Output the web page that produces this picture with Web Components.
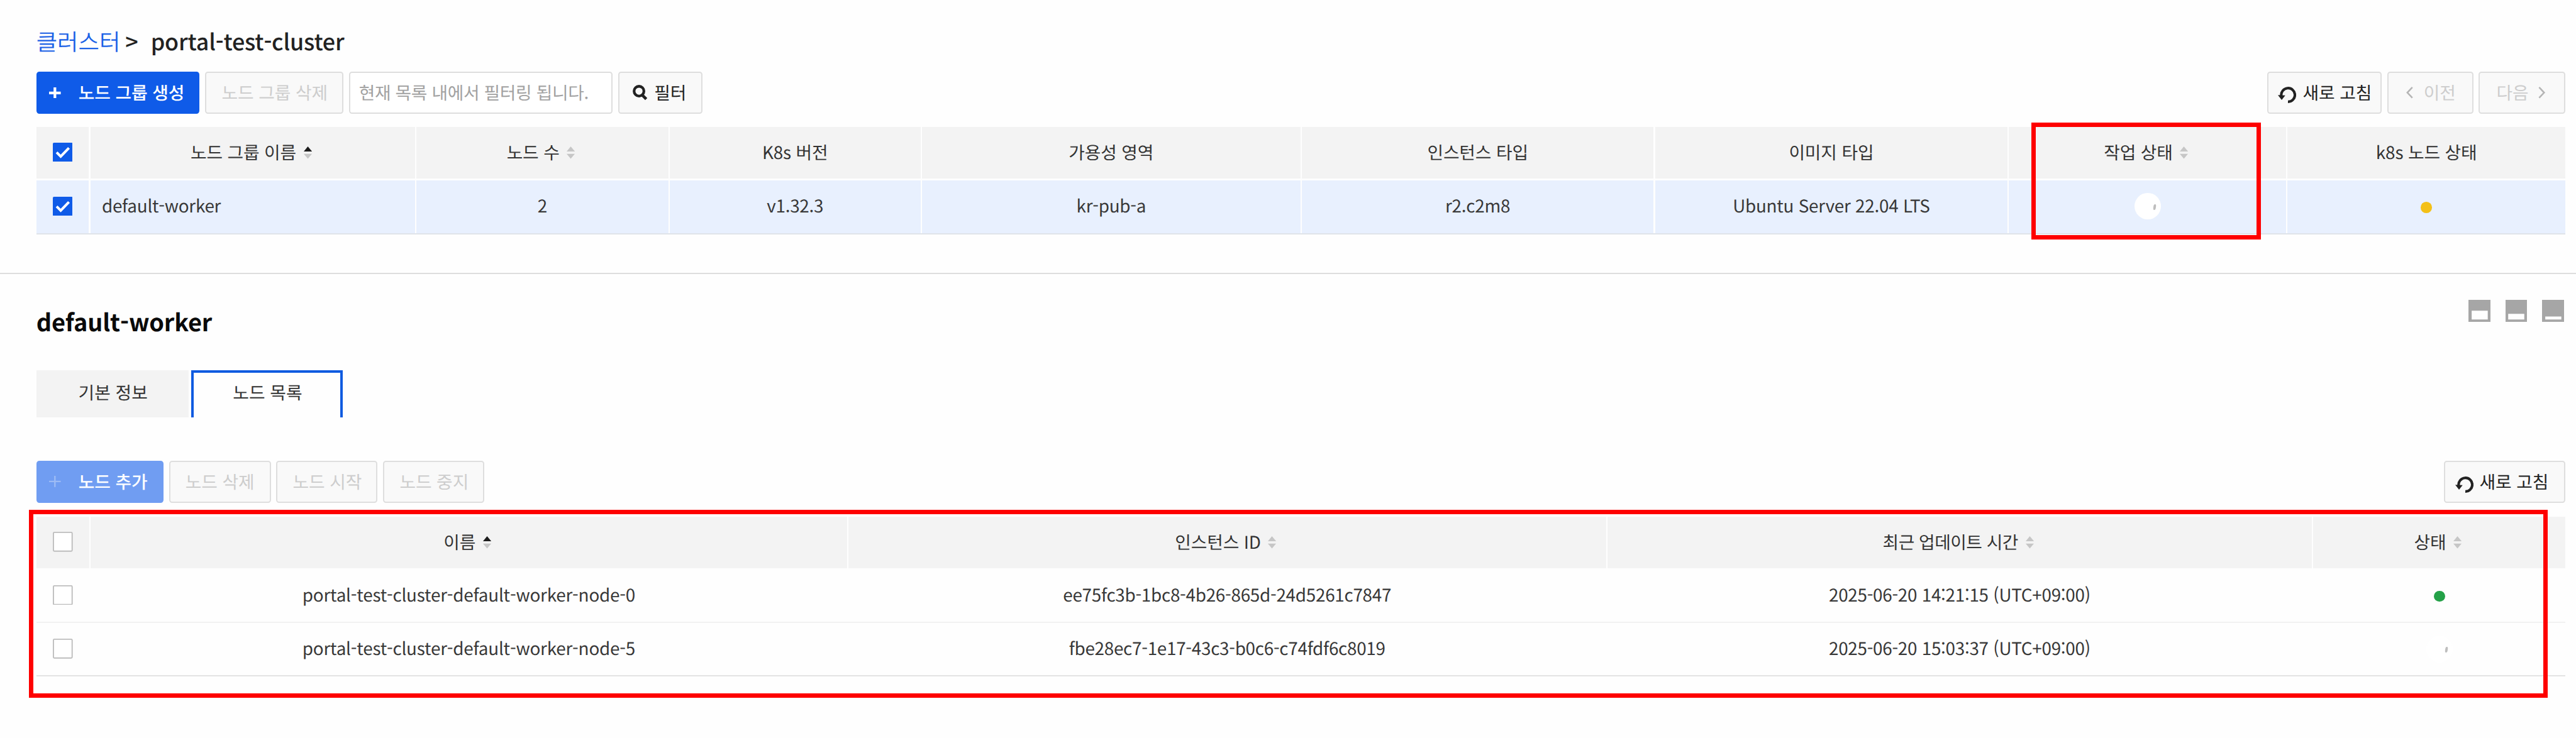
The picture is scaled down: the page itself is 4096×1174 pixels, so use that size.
<!DOCTYPE html>
<html lang="ko">
<head>
<meta charset="utf-8">
<title>portal-test-cluster</title>
<style>
  /* 1rem = ten design pixels on a 4400px wide canvas */
  html { font-size: calc(100vw / 440); }
  body { margin: 0; background: #fefefe; overflow: hidden; }
</style>
</head>
<body>
<cluster-page></cluster-page>
<script>
const define = (name, html, setup) => {
  const tpl = document.createElement('template');
  tpl.innerHTML = html;
  customElements.define(name, class extends HTMLElement {
    constructor() {
      super();
      this.attachShadow({ mode: 'open' }).append(tpl.content.cloneNode(true));
    }
    connectedCallback() { if (setup) setup(this, this.shadowRoot); }
  });
};

const ICONS = {
  plus: [20, 19, '<path d="M10 0v19M0 9.5h20" stroke="currentColor" stroke-width="4.6" fill="none"/>'],
  'plus-thin': [20, 19, '<path d="M10 0v19M0 9.5h20" stroke="currentColor" stroke-width="2.6" fill="none"/>'],
  search: [25, 26, '<circle cx="10.8" cy="10.8" r="8.400" stroke="currentColor" stroke-width="4.6" fill="none"/><path d="M16 17l7.200 7.300" stroke="currentColor" stroke-width="5" fill="none"/>'],
  refresh: [31, 28, '<path d="M5.800 15.500A11.700 11.700 0 1 1 17.200 25.700" stroke="currentColor" stroke-width="4.4" fill="none"/><path d="M0 14.300l12.600.4L6.500 22.500z" fill="currentColor"/>'],
  prev: [12, 20, '<path d="M10.5 1L2 10l8.500 9" stroke="currentColor" stroke-width="2.8" fill="none"/>'],
  next: [12, 20, '<path d="M1.500 1L10 10l-8.500 9" stroke="currentColor" stroke-width="2.8" fill="none"/>'],
  check: [34, 33, '<rect width="34" height="33" rx="2" fill="#0f5be8"/><path d="M6.500 16.500l7 7L27.500 9" stroke="#fff" stroke-width="4.4" fill="none"/>'],
  box: [34, 34, '<rect x="1" y="1" width="32" height="32" rx="1.500" fill="#fff" stroke="#bdbdbd" stroke-width="2"/>'],
  'pane-half': [38, 38, '<path fill="#a6a6a6" fill-rule="evenodd" d="M0 0h38v38H0zM5.500 18.500v15h27.500v-15z"/>'],
  'pane-third': [37, 38, '<path fill="#a6a6a6" fill-rule="evenodd" d="M0 0h37v38H0zM4.500 24v9.500h27.500V24z"/>'],
  'pane-min': [38, 38, '<path fill="#a6a6a6" fill-rule="evenodd" d="M0 0h38v38H0zM5.500 28.500v5h27.500v-5z"/>'],
  sort: [14, 21, '<path d="M0 8.500L7 0l7 8.500z" fill="#c6c6c6"/><path d="M0 12.500h14L7 21z" fill="#c6c6c6"/>'],
  'sort-asc': [14, 21, '<path d="M0 8.500L7 0l7 8.500z" fill="#1c1c1c"/><path d="M0 12.500h14L7 21z" fill="#c6c6c6"/>']
};

define('ui-icon', `<style>:host{display:block;flex:none;line-height:0}svg{display:block}</style>`, (el, root) => {
  const [w, h, body] = ICONS[el.getAttribute('name')];
  root.innerHTML += `<svg viewBox="0 0 ${w} ${h}" style="width:${w / 10}rem;height:${h / 10}rem">${body}</svg>`;
});

define('ui-button', `<style>
  :host{display:flex;align-items:center;box-sizing:border-box;height:7.2rem;border:.23rem solid #dedede;border-radius:.5rem;
    background:#f9f9f9;color:#222;white-space:nowrap;letter-spacing:-.01rem;font-weight:400}
  :host([disabled]){color:#cdcdcd}
  :host([primary]){background:#0f5be8;border-color:#0f5be8;color:#fff;font-weight:500}
  :host([primary][disabled]){background:#709df2;border-color:#709df2}
  :host([field]){background:#fff;color:#a2a2a2;letter-spacing:-.04rem}
</style><slot></slot>`);

define('tab-item', `<style>
  :host{display:flex;align-items:center;justify-content:center;box-sizing:border-box;height:8rem;background:#f3f3f3;color:#333;
    padding:0 0 .5rem .2rem}
  :host([active]){background:#fefefe;border:.44rem solid #0f5be0;border-bottom:0;padding-bottom:.9rem}
</style><slot></slot>`);

define('data-grid', `<style>:host{display:flex;flex-direction:column}</style><slot></slot>`);

define('grid-row', `<style>
  :host{display:grid;grid-template-columns:var(--cols);column-gap:.24rem;box-sizing:border-box;height:9.1rem;color:#383838;
    letter-spacing:-.026rem}
  :host([head]){--cell:#f3f3f3;height:8.9rem;color:#333;letter-spacing:-.015rem}
  :host([selected]){--cell:#e8f0fe;border-bottom:.23rem solid #dfe3e9;height:9.2rem;margin-top:.3rem}
  :host([line]){border-bottom:.23rem solid #f2f2f2}
  :host([end]){border-bottom:.23rem solid #e3e3e3}
</style><slot></slot>`);

define('grid-cell', `<style>
  :host{display:flex;align-items:center;justify-content:center;background:var(--cell,transparent);white-space:nowrap;min-width:0}
  :host([start]){justify-content:flex-start;padding-left:1.98rem}
  :host([up]){padding-bottom:.4rem}
  :host([lift]){padding-bottom:.2rem}
  ::slotted(.sort){margin:0 .5rem 0 1.25rem}
</style><slot></slot>`);

define('status-dot', `<style>
  :host{display:block;width:1.9rem;height:1.9rem;border-radius:50%;background:var(--dot);margin-top:.4rem}
</style>`);

define('status-spinner', `<style>
  :host{display:flex;align-items:center;justify-content:flex-end;box-sizing:border-box;width:4.5rem;height:4.6rem;border-radius:50%;
    background:#fff;padding:.3rem .75rem 0 0}
  i{display:block;width:.45rem;height:1rem;border-radius:40%;background:#bebebe;transform:skewX(-8deg)}
</style><i></i>`);

define('focus-frame', `<style>
  :host{position:absolute;box-sizing:border-box;border:.76rem solid #fe0000;pointer-events:none}
</style>`);

define('cluster-page', `<style>
  :host{display:block;position:relative;box-sizing:border-box;width:100vw;height:100vh;overflow:hidden;
    font:400 2.99rem/4.4rem "Noto Sans CJK KR","Noto Sans",sans-serif;color:#333;text-rendering:geometricPrecision}
  section,.bar,.group,.crumb,.tabs,.panes,.head{display:flex}
  section{flex-direction:column;padding:0 1.8rem 0 6.2rem}
  .crumb{height:5.5rem;padding-top:4.2rem;align-items:baseline;font-size:3.85rem;line-height:5.6rem;color:#222;white-space:nowrap}
  .crumb a{color:#1b62e6;font-size:3.9rem;font-weight:350;width:15.2rem}
  .crumb span{font-weight:500;letter-spacing:-.014rem}
  .crumb .sep{width:4.35rem}
  .bar{justify-content:space-between}
  .bar.one{margin-top:2.55rem}
  .bar.two{margin-top:7.4rem}
  .group{gap:.95rem}
  .g1{--cols:8.98rem 55.46rem 43.03rem 42.85rem 64.65rem 60.09rem 60.23rem 47.31rem 1fr;margin-top:2.2rem}
  .g2{--cols:9.06rem 129.15rem 129.44rem 120.31rem 1fr;margin-top:2.4rem}
  .rule{height:.2rem;background:#dedede;margin-top:6.600rem}
  .head{justify-content:space-between;align-items:flex-start;margin-top:4.4rem}
  h2{margin:.65rem 0 0;font-size:4.07rem;line-height:6rem;font-weight:700;color:#0a0a0a;letter-spacing:-.009rem}
  .panes{gap:2.55rem;margin-right:.2rem}
  .tabs{gap:.5rem;margin-top:5.4rem}
  .uuid{letter-spacing:-.028rem}.date{letter-spacing:-.029rem}.name{letter-spacing:-.021rem}.tight{letter-spacing:-.055rem}
  .f1{left:347rem;top:21rem;width:39.2rem;height:19.9rem}
  .f2{left:4.9rem;top:87.15rem;width:430.3rem;height:32.05rem}
</style>
<section>
  <div class="crumb"><a>클러스터</a><span class="sep">&gt;</span><span>portal-test-cluster</span></div>
  <div class="bar one">
    <div class="group">
      <ui-button primary style="width:27.9rem;padding-left:2rem;gap:3rem"><ui-icon name="plus"></ui-icon><span>노드 그룹 생성</span></ui-button>
      <ui-button disabled style="width:23.6rem;padding-left:2.6rem"><span>노드 그룹 삭제</span></ui-button>
      <ui-button field style="width:45rem;padding-left:1.5rem"><span>현재 목록 내에서 필터링 됩니다.</span></ui-button>
      <ui-button style="width:14.4rem;padding-left:2.3rem;gap:1.200rem"><ui-icon name="search"></ui-icon><span>필터</span></ui-button>
    </div>
    <div class="group right">
      <ui-button style="width:19.6rem;padding-left:1.700rem;gap:1.1rem"><ui-icon name="refresh" style="margin-top:.8rem"></ui-icon><span>새로 고침</span></ui-button>
      <ui-button disabled style="width:14.7rem;padding-left:3rem;gap:1.800rem"><ui-icon name="prev" style="color:#b5b5b5"></ui-icon><span>이전</span></ui-button>
      <ui-button disabled style="width:14.8rem;padding-left:2.800rem;gap:1.700rem"><span>다음</span><ui-icon name="next" style="color:#b5b5b5"></ui-icon></ui-button>
    </div>
  </div>
  <data-grid class="g1">
    <grid-row head>
      <grid-cell lift><ui-icon name="check"></ui-icon></grid-cell>
      <grid-cell><span>노드 그룹 이름</span><ui-icon class="sort" name="sort-asc"></ui-icon></grid-cell>
      <grid-cell><span>노드 수</span><ui-icon class="sort" name="sort"></ui-icon></grid-cell>
      <grid-cell><span>K8s 버전</span></grid-cell>
      <grid-cell><span>가용성 영역</span></grid-cell>
      <grid-cell><span>인스턴스 타입</span></grid-cell>
      <grid-cell><span>이미지 타입</span></grid-cell>
      <grid-cell><span>작업 상태</span><ui-icon class="sort" name="sort"></ui-icon></grid-cell>
      <grid-cell><span>k8s 노드 상태</span></grid-cell>
    </grid-row>
    <grid-row selected>
      <grid-cell lift><ui-icon name="check"></ui-icon></grid-cell>
      <grid-cell start up><span>default-worker</span></grid-cell>
      <grid-cell up><span>2</span></grid-cell>
      <grid-cell up><span>v1.32.3</span></grid-cell>
      <grid-cell up><span>kr-pub-a</span></grid-cell>
      <grid-cell up><span>r2.c2m8</span></grid-cell>
      <grid-cell up><span>Ubuntu Server 22.04 LTS</span></grid-cell>
      <grid-cell lift><status-spinner></status-spinner></grid-cell>
      <grid-cell lift><status-dot style="--dot:#f3c018"></status-dot></grid-cell>
    </grid-row>
  </data-grid>
</section>
<div class="rule"></div>
<section>
  <div class="head">
    <h2>default-worker</h2>
    <div class="panes"><ui-icon name="pane-half"></ui-icon><ui-icon name="pane-third"></ui-icon><ui-icon name="pane-min"></ui-icon></div>
  </div>
  <div class="tabs">
    <tab-item style="width:26rem">기본 정보</tab-item>
    <tab-item active style="width:25.8rem">노드 목록</tab-item>
  </div>
  <div class="bar two">
    <div class="group">
      <ui-button primary disabled style="width:21.7rem;padding-left:2rem;gap:3rem"><ui-icon name="plus-thin" style="color:#9dbbf5"></ui-icon><span>노드 추가</span></ui-button>
      <ui-button disabled style="width:17.4rem;padding-left:2.600rem"><span>노드 삭제</span></ui-button>
      <ui-button disabled style="width:17.3rem;padding-left:2.600rem"><span>노드 시작</span></ui-button>
      <ui-button disabled style="width:17.3rem;padding-left:2.600rem"><span>노드 중지</span></ui-button>
    </div>
    <ui-button style="width:20.8rem;padding-left:1.800rem;gap:1rem"><ui-icon name="refresh" style="margin-top:1.1rem"></ui-icon><span>새로 고침</span></ui-button>
  </div>
  <data-grid class="g2">
    <grid-row head style="height:8.8rem">
      <grid-cell lift><ui-icon name="box"></ui-icon></grid-cell>
      <grid-cell><span>이름</span><ui-icon class="sort" name="sort-asc"></ui-icon></grid-cell>
      <grid-cell><span>인스턴스 ID</span><ui-icon class="sort" name="sort"></ui-icon></grid-cell>
      <grid-cell><span class="tight">최근 업데이트 시간</span><ui-icon class="sort" name="sort"></ui-icon></grid-cell>
      <grid-cell><span>상태</span><ui-icon class="sort" name="sort"></ui-icon></grid-cell>
    </grid-row>
    <grid-row line style="height:9.400rem">
      <grid-cell><ui-icon name="box"></ui-icon></grid-cell>
      <grid-cell><span class="name">portal-test-cluster-default-worker-node-0</span></grid-cell>
      <grid-cell><span class="uuid">ee75fc3b-1bc8-4b26-865d-24d5261c7847</span></grid-cell>
      <grid-cell><span class="date">2025-06-20 14:21:15 (UTC+09:00)</span></grid-cell>
      <grid-cell><status-dot style="--dot:#24a148"></status-dot></grid-cell>
    </grid-row>
    <grid-row end>
      <grid-cell lift><ui-icon name="box"></ui-icon></grid-cell>
      <grid-cell lift><span class="name">portal-test-cluster-default-worker-node-5</span></grid-cell>
      <grid-cell lift><span class="uuid">fbe28ec7-1e17-43c3-b0c6-c74fdf6c8019</span></grid-cell>
      <grid-cell lift><span class="date">2025-06-20 15:03:37 (UTC+09:00)</span></grid-cell>
      <grid-cell><status-spinner></status-spinner></grid-cell>
    </grid-row>
  </data-grid>
</section>
<focus-frame class="f1"></focus-frame>
<focus-frame class="f2"></focus-frame>`);
</script>
</body>
</html>
